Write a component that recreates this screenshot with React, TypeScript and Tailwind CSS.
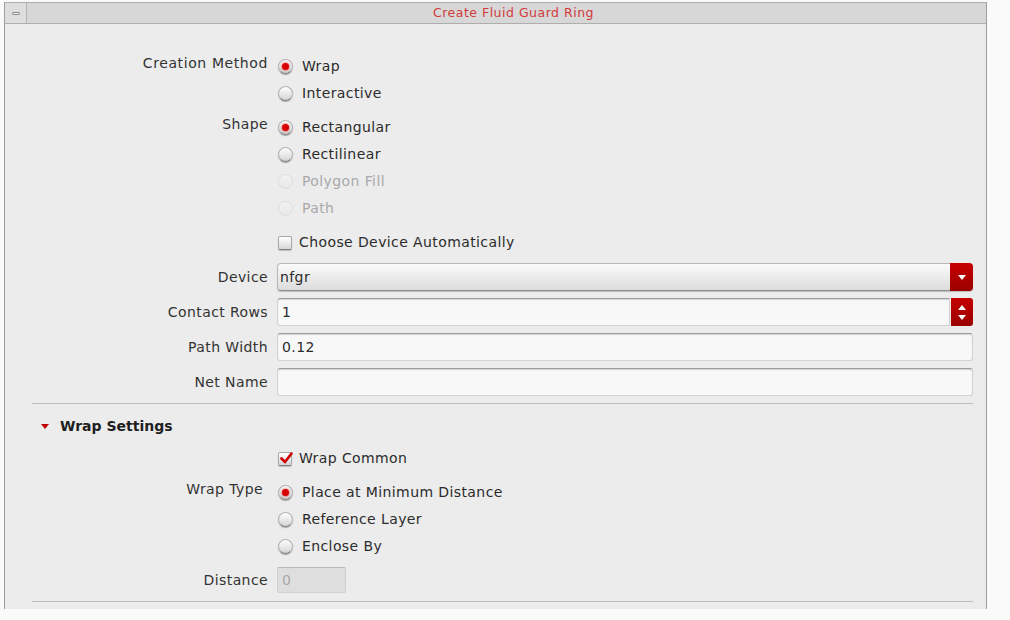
import React from "react";

const font = { fontFamily: '"DejaVu Sans", "Liberation Sans", sans-serif' };

function Radio({
  label,
  checked = false,
  disabled = false,
}: {
  label: string;
  checked?: boolean;
  disabled?: boolean;
}) {
  return (
    <div className="flex h-[27px] items-center">
      <span
        className={
          disabled
            ? "ml-[1px] flex h-[15px] w-[15px] items-center justify-center rounded-full border border-[#dcdcdc] bg-gradient-to-b from-[#f2f2f2] to-[#e8e8e8]"
            : "ml-[1px] flex h-[15px] w-[15px] items-center justify-center rounded-full border border-[#b2b2b2] border-b-[#7e7e7e] bg-gradient-to-b from-[#ffffff] to-[#d4d4d4] shadow-[0_1px_1px_rgba(0,0,0,0.3)]"
        }
      >
        {checked && (
          <span className="h-[7px] w-[7px] rounded-full bg-[#d80000] shadow-[0_0_2px_1px_rgba(220,0,0,0.35)]" />
        )}
      </span>
      <span className={disabled ? "ml-[9px] text-[#a9a9a9]" : "ml-[9px] text-[#2b2b2b]"}>{label}</span>
    </div>
  );
}

function Checkbox({ label, checked = false }: { label: string; checked?: boolean }) {
  return (
    <div className="flex h-[27px] items-center">
      <span className="relative ml-[1px] flex h-[14px] w-[14px] items-center justify-center rounded-[2px] border border-[#a8a8a8] border-b-[#7e7e7e] bg-gradient-to-b from-[#ffffff] to-[#d6d6d6] shadow-[0_1px_1px_rgba(0,0,0,0.2)]">
        {checked && (
          <svg width="13" height="12" viewBox="0 0 13 12" className="absolute -top-[1px] left-[1px]">
            <path d="M1.5 6.5 L5 10 L11.5 1.5" fill="none" stroke="#d00000" strokeWidth="2.6" strokeLinecap="round" strokeLinejoin="round" />
          </svg>
        )}
      </span>
      <span className="ml-[7px] text-[#2b2b2b]">{label}</span>
    </div>
  );
}

function Row({
  label,
  group = false,
  className = "",
  labelClass = "",
  children,
}: {
  label: string;
  group?: boolean;
  className?: string;
  labelClass?: string;
  children: React.ReactNode;
}) {
  return (
    <div className={`flex ${className}`}>
      <div
        className={
          group
            ? `flex h-[27px] w-[236px] shrink-0 items-center justify-end pb-[7px] text-[#333333] ${labelClass}`
            : `flex w-[236px] shrink-0 items-center justify-end text-[#333333] ${labelClass}`
        }
      >
        {label}
      </div>
      <div className="ml-[9px] flex-1">{children}</div>
    </div>
  );
}

function TextField({ value = "" }: { value?: string }) {
  return (
    <div className="flex h-[28px] items-center rounded-[3px] border border-[#d2d2d2] border-t-[#9c9c9c] bg-[#f8f8f8] pl-[4px] text-[#2b2b2b] shadow-[inset_0_1px_1px_rgba(0,0,0,0.15)]">
      {value}
    </div>
  );
}

export default function App() {
  return (
    <div className="h-[620px] w-[1010px] overflow-hidden bg-[#fafafa] pt-[2px] text-[14px] tracking-[0.4px]" style={font}>
      <div className="ml-[4px] flex h-[607px] w-[983px] flex-col border-x border-[#9e9e9e] bg-[#ececec]">
        {/* title bar */}
        <div className="flex h-[22px] shrink-0 items-center border-y border-[#aeaeae] bg-[#d7d7d7]">
          <div className="flex h-full w-[22px] items-center justify-center border-r border-[#b4b4b4] bg-[#dedede]">
            <span className="h-[3px] w-[8px] rounded-[1px] border border-[#8c8c8c] bg-[#eeeeee]" />
          </div>
          <div className="flex flex-1 justify-center pl-[14px] text-[12.5px] tracking-[0.5px] text-[#d23a3a]">Create Fluid Guard Ring</div>
        </div>

        {/* content */}
        <div className="flex flex-col pl-[27px] pr-[13px] pt-[29px]">
          <Row label="Creation Method" group labelClass="tracking-[0.6px]">
            <Radio label="Wrap" checked />
            <Radio label="Interactive" />
          </Row>

          <Row label="Shape" group className="mt-[7px]">
            <Radio label="Rectangular" checked />
            <Radio label="Rectilinear" />
            <Radio label="Polygon Fill" disabled />
            <Radio label="Path" disabled />
          </Row>

          <Row label="" className="mt-[7px]">
            <Checkbox label="Choose Device Automatically" />
          </Row>

          <Row label="Device" className="mt-[7px]">
            <div className="flex h-[28px] items-stretch rounded-[4px] border border-[#b8b8b8] border-b-[#8e8e8e] bg-gradient-to-b from-[#fbfbfb] to-[#dcdcdc] shadow-[0_1px_1px_rgba(0,0,0,0.2)]">
              <div className="flex flex-1 items-center pl-[2px] text-[#2b2b2b]">nfgr</div>
              <div className="-my-[1px] -mr-[1px] flex w-[23px] items-center justify-center rounded-r-[4px] bg-gradient-to-b from-[#c80000] to-[#9a0000]">
                <svg width="8" height="5" viewBox="0 0 8 5">
                  <path d="M0 0 H8 L4 5 Z" fill="#ffffff" />
                </svg>
              </div>
            </div>
          </Row>

          <Row label="Contact Rows" className="mt-[7px]">
            <div className="flex h-[28px] items-stretch">
              <div className="flex flex-1 items-center rounded-l-[3px] border border-[#d2d2d2] border-t-[#9c9c9c] bg-[#f8f8f8] pl-[4px] text-[#2b2b2b] shadow-[inset_0_1px_1px_rgba(0,0,0,0.15)]">
                1
              </div>
              <div className="ml-[1px] flex w-[22px] flex-col items-center justify-center gap-[5px] rounded-r-[3px] bg-gradient-to-b from-[#c40000] to-[#9a0000]">
                <svg width="8" height="5" viewBox="0 0 8 5">
                  <path d="M0 5 H8 L4 0 Z" fill="#ffffff" />
                </svg>
                <svg width="8" height="5" viewBox="0 0 8 5">
                  <path d="M0 0 H8 L4 5 Z" fill="#ffffff" />
                </svg>
              </div>
            </div>
          </Row>

          <Row label="Path Width" className="mt-[7px]">
            <TextField value="0.12" />
          </Row>

          <Row label="Net Name" className="mt-[7px]">
            <TextField />
          </Row>

          <div className="mt-[7px] h-[1px] bg-[#bdbdbd]" />

          {/* Wrap Settings */}
          <div className="mt-[9px] flex h-[27px] items-center">
            <svg width="8" height="5" viewBox="0 0 8 5" className="ml-[9px]">
              <path d="M0 0 H8 L4 5 Z" fill="#c00000" />
            </svg>
            <span className="ml-[11px] font-bold tracking-[0px] text-[#1e1e1e]">Wrap Settings</span>
          </div>

          <Row label="" className="mt-[5px]">
            <Checkbox label="Wrap Common" checked />
          </Row>

          <Row label="Wrap Type" group className="mt-[7px]" labelClass="pr-[5px]">
            <Radio label="Place at Minimum Distance" checked />
            <Radio label="Reference Layer" />
            <Radio label="Enclose By" />
          </Row>

          <Row label="Distance" className="mt-[7px]">
            <div className="flex h-[26px] w-[69px] items-center rounded-[2px] border border-[#d0d0d0] border-t-[#b8b8b8] bg-[#dedede] pl-[4px] text-[#a8a8a8]">
              0
            </div>
          </Row>

          <div className="mt-[8px] h-[1px] bg-[#bdbdbd]" />
        </div>
      </div>
    </div>
  );
}
